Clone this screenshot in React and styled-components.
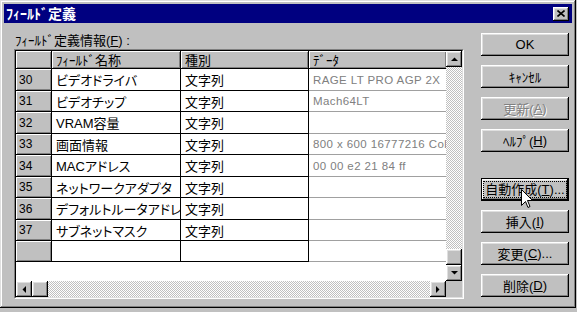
import React from "react";
import styled, { createGlobalStyle, css } from "styled-components";

const FONT = `"Liberation Sans", "Noto Sans CJK JP", sans-serif`;

const Global = createGlobalStyle`
  html, body { margin: 0; padding: 0; background: #c0c0c0; }
  body {
    width: 577px; height: 312px; overflow: hidden;
    font-family: ${FONT}; font-size: 13px; color: #000;
    font-feature-settings: "palt";
  }
`;

const raised = css`
  background: #c0c0c0;
  box-shadow: inset -1px -1px #000, inset 1px 1px #fff,
    inset -2px -2px #808080, inset 2px 2px #dfdfdf;
`;

const Dialog = styled.div`
  width: 576px;
  height: 308px;
  box-sizing: border-box;
  padding: 4px;
  background: #c0c0c0;
  box-shadow: inset -1px -1px #000, inset 1px 1px #dfdfdf,
    inset -2px -2px #808080, inset 2px 2px #fff;
  display: flex;
  flex-direction: column;
`;

const TitleBar = styled.div`
  height: 19px;
  flex: none;
  background: #000080;
  display: flex;
  align-items: center;
  justify-content: space-between;
  padding: 0 3px 0 2px;
`;

const TitleText = styled.span`
  color: #fff;
  font-weight: bold;
  font-size: 14px;
  line-height: 16px;
`;

const CloseButton = styled.div`
  ${raised};
  width: 16px;
  height: 14px;
  display: flex;
  align-items: center;
  justify-content: center;
`;

const Body = styled.div`
  flex: 1;
  display: flex;
  align-items: flex-start;
  padding-left: 10px;
`;

const LeftPane = styled.div`
  width: 450px;
  display: flex;
  flex-direction: column;
`;

const Label = styled.div`
  height: 26px;
  box-sizing: border-box;
  padding: 11px 0 0 1px;
  line-height: 14px;
  font-size: 13px;
`;

const Mn = styled.u`
  text-decoration: underline;
  text-underline-offset: 1px;
`;

const SunkenOuter = styled.div`
  width: 450px;
  height: 250px;
  box-sizing: border-box;
  border: 1px solid;
  border-color: #808080 #fff #fff #808080;
`;

const SunkenInner = styled.div`
  width: 100%;
  height: 100%;
  box-sizing: border-box;
  border: 1px solid;
  border-color: #000 #dfdfdf #dfdfdf #000;
  display: grid;
  grid-template-columns: 430px 16px;
  grid-template-rows: 230px 16px;
`;

const Table = styled.div`
  background: #fff;
  overflow: hidden;
  display: flex;
  flex-direction: column;
`;

const Row = styled.div`
  display: grid;
  grid-template-columns: 36px 129px 128px 137px;
  height: ${(p) => p.$h}px;
  flex: none;
`;

const HeadCell = styled.div`
  box-sizing: border-box;
  background: #c0c0c0;
  border-right: ${(p) => (p.$last ? "none" : "1px solid #000")};
  border-bottom: 1px solid #000;
  box-shadow: inset 1px 1px #fff, inset -1px -1px #808080;
  padding-left: 4px;
  display: flex;
  align-items: center;
  white-space: nowrap;
  overflow: hidden;
  font-size: 13px;
`;

const NumCell = styled(HeadCell)`
  font-size: 12px;
  padding-left: 3px;
`;

const Cell = styled.div`
  box-sizing: border-box;
  background: #fff;
  border-right: ${(p) => (p.$data ? "none" : "1px solid #000")};
  border-bottom: 1px solid ${(p) => (p.$data ? "#a0a0a0" : "#000")};
  padding-left: 4px;
  display: flex;
  align-items: center;
  white-space: nowrap;
  overflow: hidden;
  color: ${(p) => (p.$data ? "#808080" : "#000")};
  font-size: ${(p) => (p.$data ? 11.5 : 13)}px;
  letter-spacing: ${(p) => (p.$data ? "0.4px" : "0")};
`;

const VScroll = styled.div`
  display: flex;
  flex-direction: column;
`;

const HScroll = styled.div`
  display: flex;
`;

const ScrollBtn = styled.div`
  ${raised};
  width: 16px;
  height: 16px;
  flex: none;
  display: flex;
  align-items: center;
  justify-content: center;
`;

const Track = styled.div`
  flex: 1;
  background-color: #fff;
  background-image: conic-gradient(
    #c0c0c0 25%,
    transparent 0 50%,
    #c0c0c0 0 75%,
    transparent 0
  );
  background-size: 2px 2px;
`;

const Corner = styled.div`
  background: #c0c0c0;
`;

const RightPane = styled.div`
  margin-left: 17px;
  padding-top: 10px;
  width: 88px;
  display: flex;
  flex-direction: column;
  gap: 9px;
`;

const Button = styled.div`
  ${raised};
  position: relative;
  height: 23px;
  box-sizing: border-box;
  display: flex;
  align-items: center;
  justify-content: center;
  font-size: 13px;
  margin-top: ${(p) => (p.$gapTop ? 17 : 0)}px;
  color: ${(p) => (p.$disabled ? "#808080" : "#000")};
  text-shadow: ${(p) => (p.$disabled ? "1px 1px #fff" : "none")};
  ${(p) =>
    p.$default &&
    css`
      box-shadow: inset 0 0 0 1px #000, inset -2px -2px #000,
        inset 2px 2px #fff, inset -3px -3px #808080, inset 3px 3px #dfdfdf;
    `}
`;

const Focus = styled.span`
  outline: 1px dotted #000;
  outline-offset: 0;
  padding: 0 1px;
  line-height: 15px;
`;

const Cursor = styled.svg`
  position: absolute;
  left: 40px;
  top: 11px;
`;

const Arrow = ({ dir }) => {
  const pts = {
    up: "0,4 7,4 3.5,0.5",
    down: "0,0 7,0 3.5,3.5",
    left: "4,0 4,7 0.5,3.5",
    right: "0,0 0,7 3.5,3.5",
  }[dir];
  const vertical = dir === "up" || dir === "down";
  return (
    <svg width={vertical ? 7 : 4} height={vertical ? 4 : 7} viewBox={vertical ? "0 0 7 4" : "0 0 4 7"}>
      <polygon points={pts} fill="#000" />
    </svg>
  );
};

const rows = [
  ["30", "ビデオドライバ", "文字列", "RAGE LT PRO AGP 2X"],
  ["31", "ビデオチップ", "文字列", "Mach64LT"],
  ["32", "VRAM容量", "文字列", ""],
  ["33", "画面情報", "文字列", "800 x 600 16777216 Colors"],
  ["34", "MACアドレス", "文字列", "00 00 e2 21 84 ff"],
  ["35", "ネットワークアダプタ", "文字列", ""],
  ["36", "デフォルトルータアドレス", "文字列", ""],
  ["37", "サブネットマスク", "文字列", ""],
  ["", "", "", ""],
];
const heights = [22, 21, 22, 21, 22, 21, 22, 21, 21];

export default function App() {
  return (
    <>
      <Global />
      <Dialog>
        <TitleBar>
          <TitleText>ﾌｨｰﾙﾄﾞ定義</TitleText>
          <CloseButton>
            <svg width="8" height="7" viewBox="0 0 8 7">
              <path d="M0.5 0.5 L7.5 6.5 M7.5 0.5 L0.5 6.5" stroke="#000" strokeWidth="1.6" />
            </svg>
          </CloseButton>
        </TitleBar>
        <Body>
          <LeftPane>
            <Label>
              ﾌｨｰﾙﾄﾞ定義情報(<Mn>F</Mn>) :
            </Label>
            <SunkenOuter>
              <SunkenInner>
                <Table>
                  <Row $h={18}>
                    <HeadCell />
                    <HeadCell>ﾌｨｰﾙﾄﾞ名称</HeadCell>
                    <HeadCell>種別</HeadCell>
                    <HeadCell $last>ﾃﾞｰﾀ</HeadCell>
                  </Row>
                  {rows.map((r, i) => (
                    <Row key={i} $h={heights[i]}>
                      <NumCell>{r[0]}</NumCell>
                      <Cell>{r[1]}</Cell>
                      <Cell>{r[2]}</Cell>
                      <Cell $data>{r[3]}</Cell>
                    </Row>
                  ))}
                </Table>
                <VScroll>
                  <ScrollBtn>
                    <Arrow dir="up" />
                  </ScrollBtn>
                  <Track />
                  <ScrollBtn />
                  <ScrollBtn>
                    <Arrow dir="down" />
                  </ScrollBtn>
                </VScroll>
                <HScroll>
                  <ScrollBtn>
                    <Arrow dir="left" />
                  </ScrollBtn>
                  <ScrollBtn />
                  <Track />
                  <ScrollBtn>
                    <Arrow dir="right" />
                  </ScrollBtn>
                </HScroll>
                <Corner />
              </SunkenInner>
            </SunkenOuter>
          </LeftPane>
          <RightPane>
            <Button>OK</Button>
            <Button>ｷｬﾝｾﾙ</Button>
            <Button $disabled>
              更新(<Mn>A</Mn>)
            </Button>
            <Button>
              ﾍﾙﾌﾟ(<Mn>H</Mn>)
            </Button>
            <Button $default $gapTop>
              <Focus>
                自動作成(<Mn>T</Mn>)...
              </Focus>
              <Cursor width="12" height="20" viewBox="0 0 12 20">
                <path
                  d="M0.5 0.5 L0.5 16.5 L4.5 12.5 L7 18.5 L9 17.5 L6.5 11.5 L11.5 11.5 Z"
                  fill="#fff"
                  stroke="#000"
                  strokeWidth="1"
                />
              </Cursor>
            </Button>
            <Button>
              挿入(<Mn>I</Mn>)
            </Button>
            <Button>
              変更(<Mn>C</Mn>)...
            </Button>
            <Button>
              削除(<Mn>D</Mn>)
            </Button>
          </RightPane>
        </Body>
      </Dialog>
    </>
  );
}
